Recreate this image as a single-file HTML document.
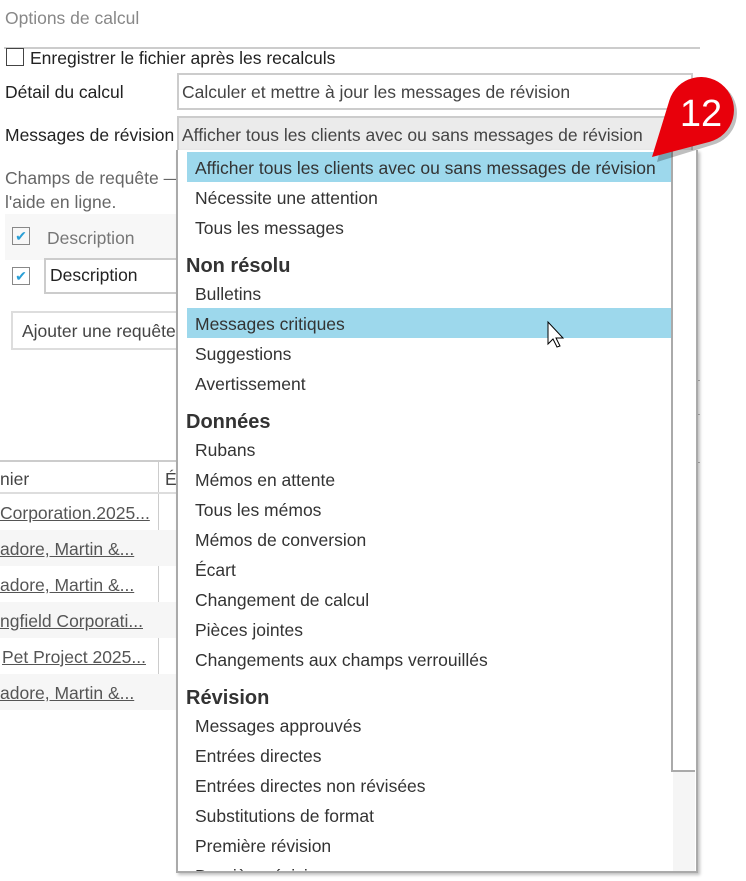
<!DOCTYPE html>
<html><head><meta charset="utf-8"><style>
body{margin:0;width:746px;height:881px;background:#fff;overflow:hidden;position:relative;font-family:"Liberation Sans",sans-serif;color:#222}
.a{position:absolute;white-space:nowrap}
.t{font-size:17.5px}
.lst div{position:absolute;left:0;width:475px;height:30px;line-height:32px;padding-left:17px;font-size:17.5px;color:#333}
.lst div.h{padding-left:8px;font-size:20px;font-weight:bold;color:#333}
.lst div.s{background:#9dd8ec;left:9px;padding-left:8px;width:476px}
.lnk{text-decoration:underline;color:#555;font-size:17.5px}
</style></head><body>
<div class="a t" style="left:5px;top:8px;color:#888">Options de calcul</div>
<div class="a" style="left:4px;top:47px;width:696px;height:2px;background:#ccc"></div>
<div class="a" style="left:6px;top:48px;width:16px;height:16px;border:1.5px solid #444"></div>
<div class="a t" style="left:30px;top:48px">Enregistrer le fichier après les recalculs</div>
<div class="a t" style="left:5px;top:82px">Détail du calcul</div>
<div class="a" style="left:177px;top:73px;width:512px;height:33px;border:2px solid #ccc"></div>
<div class="a t" style="left:182px;top:82px;color:#444">Calculer et mettre à jour les messages de révision</div>
<div class="a t" style="left:5px;top:125px">Messages de révision</div>
<div class="a" style="left:177px;top:116px;width:512px;height:34px;border:2px solid #ccc;background:#ebebeb"></div>
<div class="a t" style="left:182px;top:125px;color:#444">Afficher tous les clients avec ou sans messages de révision</div>
<div class="a t" style="left:5px;top:168px;color:#666">Champs de requête —</div>
<div class="a t" style="left:5px;top:192px;color:#666">l'aide en ligne.</div>
<div class="a" style="left:5px;top:214px;width:172px;height:46px;background:#f7f7f7"></div>
<div class="a" style="left:12px;top:227px;width:16px;height:16px;border:1.5px solid #888;color:#2a9fd6;font-size:14px;line-height:16px;text-align:center">✔</div>
<div class="a t" style="left:47px;top:228px;color:#777">Description</div>
<div class="a" style="left:12px;top:267px;width:16px;height:16px;border:1.5px solid #888;color:#2a9fd6;font-size:14px;line-height:16px;text-align:center">✔</div>
<div class="a" style="left:44px;top:258px;width:140px;height:32px;border:2px solid #ccc"></div>
<div class="a t" style="left:50px;top:265px">Description</div>
<div class="a" style="left:11px;top:311px;width:170px;height:35px;border:2px solid #ddd"></div>
<div class="a t" style="left:22px;top:321px;color:#444">Ajouter une requête</div>
<div class="a" style="left:0;top:460px;width:177px;height:2px;background:#ccc"></div>
<div class="a" style="left:158px;top:462px;width:1px;height:248px;background:#ccc"></div>
<div class="a" style="left:0;top:492px;width:177px;height:2px;background:#ddd"></div>
<div class="a t" style="left:0;top:469px;color:#444">nier</div>
<div class="a t" style="left:165px;top:469px;color:#444">É</div>
<div class="a" style="left:0;top:530px;width:177px;height:36px;background:#f6f6f6"></div>
<div class="a" style="left:0;top:602px;width:177px;height:36px;background:#f6f6f6"></div>
<div class="a" style="left:0;top:674px;width:177px;height:36px;background:#f6f6f6"></div>
<div class="a lnk" style="left:0;top:503px">Corporation.2025...</div>
<div class="a lnk" style="left:0;top:539px">adore, Martin &amp;...</div>
<div class="a lnk" style="left:0;top:575px">adore, Martin &amp;...</div>
<div class="a lnk" style="left:0;top:611px">ngfield Corporati...</div>
<div class="a lnk" style="left:2px;top:647px">Pet Project 2025...</div>
<div class="a lnk" style="left:0;top:683px">adore, Martin &amp;...</div>
<div class="a" style="left:697px;top:380px;width:3px;height:1px;background:#bbb"></div>
<div class="a" style="left:697px;top:414px;width:3px;height:1px;background:#bbb"></div>
<div class="a" style="left:697px;top:462px;width:3px;height:1px;background:#bbb"></div>
<div class="a lst" style="left:176px;top:150px;width:518px;height:721px;border:2px solid #aaa;border-top:none;background:#fff;box-shadow:2px 2px 3px rgba(0,0,0,.25);overflow:hidden">
<div class="a" style="left:493px;top:0;width:22px;height:620px;border-left:2px solid #aaa;border-bottom:2px solid #aaa;padding:0;background:#fff"></div>
<div class="a" style="left:495px;top:622px;width:22px;height:99px;padding:0;background:#f5f5f5"></div>
<div class="s" style="top:2px">Afficher tous les clients avec ou sans messages de révision</div>
<div style="top:32px">Nécessite une attention</div>
<div style="top:62px">Tous les messages</div>
<div class="h" style="top:100px">Non résolu</div>
<div style="top:128px">Bulletins</div>
<div class="s" style="top:158px">Messages critiques</div>
<div style="top:188px">Suggestions</div>
<div style="top:218px">Avertissement</div>
<div class="h" style="top:256px">Données</div>
<div style="top:284px">Rubans</div>
<div style="top:314px">Mémos en attente</div>
<div style="top:344px">Tous les mémos</div>
<div style="top:374px">Mémos de conversion</div>
<div style="top:404px">Écart</div>
<div style="top:434px">Changement de calcul</div>
<div style="top:464px">Pièces jointes</div>
<div style="top:494px">Changements aux champs verrouillés</div>
<div class="h" style="top:532px">Révision</div>
<div style="top:560px">Messages approuvés</div>
<div style="top:590px">Entrées directes</div>
<div style="top:620px">Entrées directes non révisées</div>
<div style="top:650px">Substitutions de format</div>
<div style="top:680px">Première révision</div>
<div style="top:710px">Dernière révision</div>
</div>
<svg class="a" style="left:0;top:0" width="746" height="881">
<path d="M548,322 L548,344 L553,339 L557,347 L560,346 L556,338 L563,338 Z" fill="#fff" stroke="#000" stroke-width="1"/>
<path d="M654,159 L669.4,100.4 A33,33 0 1,1 709.5,141.9 Z" fill="#000" opacity=".25" transform="translate(3,3)"/>
<path d="M652,157 L669.4,100.4 A33,33 0 1,1 709.5,141.9 Z" fill="#e8000b"/>
<text x="701" y="126" font-family="Liberation Sans" font-size="38" fill="#fff" text-anchor="middle">12</text>
</svg>
</body></html>
